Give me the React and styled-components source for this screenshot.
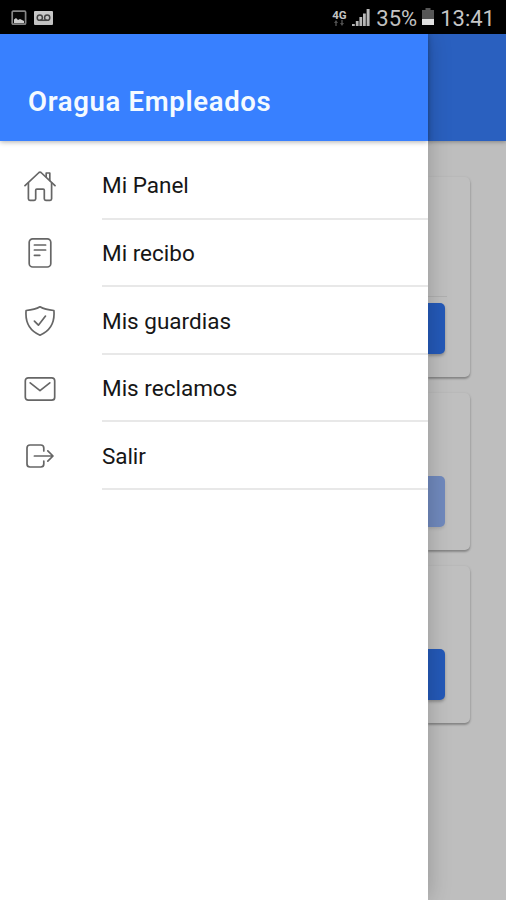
import React from "react";
import styled, { createGlobalStyle } from "styled-components";

const GlobalStyle = createGlobalStyle`
  * { box-sizing: border-box; }
  body { margin: 0; background: #fff; font-family: Roboto, sans-serif; }
`;

const Screen = styled.div`
  display: flex;
  flex-direction: column;
  width: 506px;
  height: 900px;
  overflow: hidden;
`;

const StatusBar = styled.header`
  display: flex;
  justify-content: space-between;
  flex: none;
  height: 34px;
  padding: 0 11px;
  background: #000;
  color: #c6c6c6;
`;

const StatusGroup = styled.div`
  display: flex;
  align-items: center;
  padding-top: 2px;
  gap: ${(p) => p.$gap || 0}px;
`;

const Network = styled.div`
  display: flex;
  flex-direction: column;
  align-items: center;
  width: 16px;
  margin-right: 5px;
  font-size: 11.5px;
  line-height: 10px;
  font-weight: 700;
`;

const StatusText = styled.span`
  padding-top: 2px;
  font-size: 22px;
  line-height: 30px;
  white-space: nowrap;
`;

const Body = styled.div`
  display: flex;
  flex: 1;
  min-height: 0;
`;

const Drawer = styled.aside`
  position: relative;
  z-index: 1;
  flex: none;
  width: 428px;
  background: #fff;
  box-shadow: 0 0 22px rgba(0, 0, 0, 0.22);
`;

const DrawerHeader = styled.div`
  height: 107px;
  padding: 52px 0 0 28px;
  background: #3880ff;
  box-shadow: 0 1px 5px rgba(0, 0, 0, 0.32);
`;

const Title = styled.h1`
  margin: 0;
  color: #f4faff;
  font-size: 27.5px;
  line-height: 32px;
  font-weight: 600;
  letter-spacing: 0.68px;
  white-space: nowrap;
`;

const Menu = styled.nav`
  padding-top: 11px;
`;

const MenuItem = styled.a`
  display: flex;
  height: 67.6px;
  padding-left: 24px;
  align-items: stretch;
`;

const IconSlot = styled.span`
  display: flex;
  align-items: center;
  width: 78px;
`;

const Label = styled.span`
  display: flex;
  flex: 1;
  align-items: center;
  padding-top: 1.2px;
  border-bottom: 2px solid #e8e8e8;
  color: #161616;
  font-size: 22.5px;
  letter-spacing: ${(p) => p.$spacing || 0}px;
`;

const Dimmed = styled.main`
  flex: 1;
  min-width: 0;
  background: #bebebe;
`;

const PageHeader = styled.div`
  height: 107px;
  background: #2a60bf;
  box-shadow: 0 1px 4px rgba(0, 0, 0, 0.3);
`;

const Cards = styled.div`
  display: flex;
  flex-direction: column;
  gap: 16px;
  padding-top: 36px;
`;

const Card = styled.section`
  display: flex;
  flex-direction: column;
  justify-content: flex-end;
  width: 42px;
  height: ${(p) => p.$height}px;
  padding-bottom: 23px;
  border-radius: 0 5px 5px 0;
  background: #bfbfbf;
  box-shadow: 0 2px 2px rgba(0, 0, 0, 0.2), 0 1px 3px rgba(0, 0, 0, 0.18);
`;

const Divider = styled.div`
  width: 19px;
  height: 1px;
  margin-bottom: 6px;
  background: #b0b0b0;
`;

const CardButton = styled.div`
  width: 17px;
  height: 51px;
  border-radius: 0 5px 5px 0;
  background: ${(p) => (p.$disabled ? "#7089bd" : "#2459b8")};
  box-shadow: 0 2px 3px rgba(0, 0, 0, ${(p) => (p.$disabled ? 0.1 : 0.25)});
`;

const Icon = styled.svg`
  display: block;
  flex: none;
  fill: none;
  stroke: #666;
  stroke-width: 1.7;
  stroke-linecap: round;
  stroke-linejoin: round;
`;

const MenuIcon = ({ children }) => (
  <Icon width="32" height="32" viewBox="0 0 32 32">{children}</Icon>
);

const items = [
  {
    label: "Mi Panel",
    icon: (
      <>
        <path d="M1 15.7 15 2.5q1-.9 2 0l14 13.2" />
        <path d="M4.4 13v15.8q0 1.5 1.5 1.5h4.3q1.5 0 1.5-1.5v-8.5q0-1.1 1.1-1.1h6.4q1.1 0 1.1 1.1v8.5q0 1.5 1.5 1.5h4.3q1.5 0 1.5-1.5V13" />
        <path d="M22.2 6.4V3h3.6v7.4" />
      </>
    ),
  },
  {
    label: "Mi recibo",
    icon: (
      <>
        <rect x="5.2" y="1.8" width="21.6" height="28.2" rx="3.5" />
        <path d="M10.4 8h11.2M10.4 13h11.2M10.4 18.3h5.4" />
      </>
    ),
  },
  {
    label: "Mis guardias",
    icon: (
      <>
        <path d="M16 1.8C11.8 4.3 7 5.1 2.1 5.5 1 18 6.2 26 16 30.2 25.8 26 31 18 29.9 5.5 25 5.1 20.2 4.3 16 1.8Z" />
        <path d="m10.4 16.1 4 4.1 7.1-9.1" />
      </>
    ),
  },
  {
    label: "Mis reclamos",
    icon: (
      <>
        <rect x="1.3" y="4.8" width="29.4" height="22.4" rx="3" />
        <path d="m6.2 9.8 9.8 7.8 9.8-7.8" />
      </>
    ),
  },
  {
    label: "Salir",
    spacing: -0.1,
    icon: (
      <>
        <path d="M19.8 11V8q0-3-3-3H6q-3 0-3 3v16q0 3 3 3h10.8q3 0 3-3v-3M10.4 16h18.4M23.8 10.8l5.2 5.2-5.2 5.2" />
      </>
    ),
  },
];

function PictureIcon() {
  return (
    <svg width="16" height="16" viewBox="0 0 16 16">
      <rect x="1.2" y="1.2" width="13.4" height="13" rx="1" fill="#080808" stroke="#888" strokeWidth="1.7" />
      <path d="M3 13V9.5l2-1.5 2 2 2-1 4 2V13Z" fill="#d2d2d2" />
    </svg>
  );
}

function VoicemailIcon() {
  return (
    <svg width="19" height="15" viewBox="0 0 19 15">
      <rect width="19" height="14" rx="1" fill="#c9c9c9" />
      <g fill="none" stroke="#454545" strokeWidth="1.5">
        <circle cx="5.8" cy="6.7" r="2.6" />
        <circle cx="13.2" cy="6.7" r="2.6" />
        <path d="M5.8 9.3h7.4" />
      </g>
    </svg>
  );
}

function DataArrows() {
  return (
    <svg width="10" height="6" viewBox="0 0 10 6" fill="#555">
      <path d="M0 3 2 0l2 3H2.7v3H1.3V3ZM6 3h1.3V0h1.4v3H10L8 6Z" />
    </svg>
  );
}

function SignalIcon() {
  return (
    <svg width="18" height="18" viewBox="0 0 18 18" fill="#bcbcbc">
      <path d="M0 17v-2h2.8v2ZM3.8 17v-5h2.8v5ZM7.4 17V8h2.8v9ZM11 17V4.5h2.8V17ZM14.6 17V0h3v17Z" />
    </svg>
  );
}

function BatteryIcon() {
  return (
    <svg width="12" height="18" viewBox="0 0 12 18">
      <path d="M3.5 0h5v2H12v9H0V2h3.5Z" fill="#575757" />
      <path d="M0 11h12v6H0Z" fill="#e4e4e4" />
    </svg>
  );
}

const BatterySlot = styled.span`
  display: flex;
  margin: 0 6px 2px 5px;
`;

const SignalSlot = styled.span`
  display: flex;
  margin-right: 6px;
`;

export default function App() {
  return (
    <>
      <GlobalStyle />
      <Screen>
        <StatusBar>
          <StatusGroup $gap={7}>
            <PictureIcon />
            <VoicemailIcon />
          </StatusGroup>
          <StatusGroup>
            <Network>4G<DataArrows /></Network>
            <SignalSlot><SignalIcon /></SignalSlot>
            <StatusText>35%</StatusText>
            <BatterySlot><BatteryIcon /></BatterySlot>
            <StatusText>13:41</StatusText>
          </StatusGroup>
        </StatusBar>
        <Body>
          <Drawer>
            <DrawerHeader><Title>Oragua Empleados</Title></DrawerHeader>
            <Menu>
              {items.map((item) => (
                <MenuItem key={item.label}>
                  <IconSlot><MenuIcon>{item.icon}</MenuIcon></IconSlot>
                  <Label $spacing={item.spacing}>{item.label}</Label>
                </MenuItem>
              ))}
            </Menu>
          </Drawer>
          <Dimmed>
            <PageHeader />
            <Cards>
              <Card $height={200}><Divider /><CardButton /></Card>
              <Card $height={157}><CardButton $disabled /></Card>
              <Card $height={157}><CardButton /></Card>
            </Cards>
          </Dimmed>
        </Body>
      </Screen>
    </>
  );
}
